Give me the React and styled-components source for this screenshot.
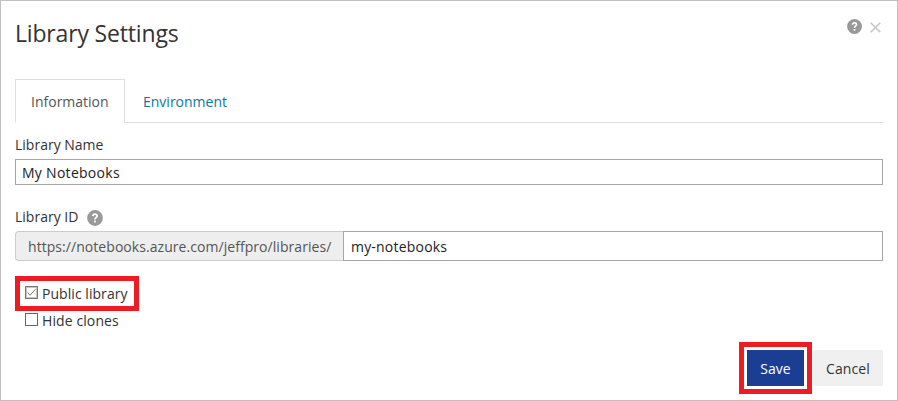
import React from "react";
import styled, { createGlobalStyle } from "styled-components";

const Global = createGlobalStyle`
  *, *::before, *::after { box-sizing: border-box; }
  body { margin: 0; background: #fff; }
`;

const Dialog = styled.main`
  display: flex;
  flex-direction: column;
  width: 898px;
  height: 401px;
  padding: 0 14px;
  border: 1px solid #c0c0c0;
  background: #fff;
  color: #333;
  font: 14px/20px "Open Sans", "Noto Sans", sans-serif;
  overflow: hidden;
`;

const Text = styled.span`
  padding-top: ${(p) => p.$drop || 0}px;
  white-space: nowrap;
  letter-spacing: ${(p) => p.$track || 0}px;
`;

const Header = styled.header`
  display: flex;
  justify-content: space-between;
  height: 78px;
`;

const Title = styled.h1`
  margin: 16px 0 0;
  font-size: 23px;
  line-height: 32px;
  font-weight: 400;
  letter-spacing: -0.17px;
`;

const HeaderActions = styled.div`
  display: flex;
  align-items: flex-start;
  gap: 8px;
  padding: 18px 2px 0 0;
`;

const IconButton = styled.button`
  display: flex;
  margin: 0;
  padding: ${(p) => p.$top || 0}px 0 0;
  border: 0;
  background: none;
`;

const Tabs = styled.nav`
  display: flex;
  height: 44px;
  border-bottom: 1px solid #ddd;
`;

const Tab = styled.a`
  display: flex;
  align-items: flex-start;
  width: ${(p) => (p.$active ? "110px" : "auto")};
  height: 44px;
  margin-right: 2px;
  padding: 12px 15px 0;
  border: 1px solid ${(p) => (p.$active ? "#ddd" : "transparent")};
  border-bottom-color: ${(p) => (p.$active ? "#fff" : "transparent")};
  color: ${(p) => (p.$active ? "#555" : "#0e76a3")};
`;

const Label = styled.label`
  display: flex;
  align-items: center;
  gap: 9px;
  height: 20px;
  margin-top: ${(p) => p.$top}px;
`;

const Field = styled.div`
  display: flex;
  align-items: center;
  flex: 1;
  height: ${(p) => p.$height}px;
  padding: 0 ${(p) => p.$inset}px;
  border: 1px solid #a6a6a6;
  color: #222;
`;

const Group = styled.div`
  display: flex;
  margin-top: 4px;
`;

const Prefix = styled.div`
  display: flex;
  align-items: center;
  width: 328px;
  height: 30px;
  padding-left: 12px;
  border: 1px solid #ccc;
  border-right: 0;
  border-radius: 4px 0 0 4px;
  background: #eee;
  color: #555;
`;

const Options = styled.div`
  display: flex;
  flex-direction: column;
  align-items: flex-start;
  margin-top: 15px;
`;

const Option = styled.label`
  display: flex;
  align-items: center;
  gap: 4px;
  width: 124px;
  height: ${(p) => (p.$highlight ? 35 : 18)}px;
  padding-left: ${(p) => (p.$highlight ? 5 : 10)}px;
  border: ${(p) => (p.$highlight ? "5px solid #ed1c24" : "0")};
`;

const Footer = styled.footer`
  display: flex;
  justify-content: flex-end;
  align-items: center;
  gap: 1px;
  margin-top: 13px;
`;

const SaveHighlight = styled.div`
  padding: 3px;
  border: 5px solid #ed1c24;
`;

const Button = styled.button`
  display: flex;
  align-items: center;
  justify-content: center;
  width: ${(p) => (p.$primary ? 57 : 70)}px;
  height: 36px;
  padding: 0;
  border: 0;
  background: ${(p) => (p.$primary ? "#1b3e92" : "#f0f0f0")};
  color: ${(p) => (p.$primary ? "#fff" : "#333")};
  font: inherit;
`;

const HelpSvg = styled.svg`
  flex: none;
  margin-top: ${(p) => p.$drop || 0}px;
`;

const CheckSvg = styled.svg`
  flex: none;
  margin-bottom: ${(p) => (p.$checked ? 2 : 1)}px;
`;

const Help = ({ size, drop }) => (
  <HelpSvg $drop={drop} width={size} height={size} viewBox="0 0 16 16" aria-label="Help">
    <circle cx="8" cy="8" r="7.9" fill="#999" />
    <path d="M5.9 6.1C6 4.7 6.8 4.1 8 4.1c1.3 0 2.1.7 2.1 1.8C10.1 7.5 8 7.5 8 9.5" fill="none" stroke="#fff" strokeWidth="1.7" />
    <rect x="7.1" y="10.6" width="1.8" height="1.8" fill="#fff" />
  </HelpSvg>
);

const Close = () => (
  <svg width="11" height="11" viewBox="0 0 11 11" aria-label="Close">
    <path d="M.7.7l9.6 9.6M10.3.7L.7 10.3" stroke="#c4c4c4" strokeWidth="1.5" />
  </svg>
);

const Check = ({ checked }) => (
  <CheckSvg $checked={checked} width="13" height="13" viewBox="0 0 13 13">
    <rect x=".5" y=".5" width="12" height="12" fill="#fff" stroke={checked ? "#777" : "#666"} />
    {checked && (
      <>
        <rect x="1.5" y="1.5" width="10" height="10" fill="none" stroke="#888" strokeDasharray="1 1" />
        <path d="M2.5 6.5L5 9.2l5.5-6" fill="none" stroke="#777" strokeWidth="1" />
      </>
    )}
  </CheckSvg>
);

export default function App() {
  return (
    <>
      <Global />
      <Dialog>
        <Header>
          <Title>Library Settings</Title>
          <HeaderActions>
            <IconButton><Help size={15} /></IconButton>
            <IconButton $top={3}><Close /></IconButton>
          </HeaderActions>
        </Header>
        <Tabs>
          <Tab $active><Text>Information</Text></Tab>
          <Tab><Text>Environment</Text></Tab>
        </Tabs>
        <Label $top={12}><Text>Library Name</Text></Label>
        <Group><Field $height={26} $inset={6}><Text $drop={2} $track={0.28}>My Notebooks</Text></Field></Group>
        <Label $top={22}><Text>Library ID</Text><Help size={16} drop={2} /></Label>
        <Group>
          <Prefix><Text $drop={2} $track={0.055}>https://notebooks.azure.com/jeffpro/libraries/</Text></Prefix>
          <Field $height={30} $inset={7}><Text $drop={2} $track={0.2}>my-notebooks</Text></Field>
        </Group>
        <Options>
          <Option $highlight><Check checked /><Text $track={0.05}>Public library</Text></Option>
          <Option><Check /><Text $drop={2} $track={0.1}>Hide clones</Text></Option>
        </Options>
        <Footer>
          <SaveHighlight><Button $primary><Text $drop={2}>Save</Text></Button></SaveHighlight>
          <Button><Text $drop={2} $track={0.1}>Cancel</Text></Button>
        </Footer>
      </Dialog>
    </>
  );
}
